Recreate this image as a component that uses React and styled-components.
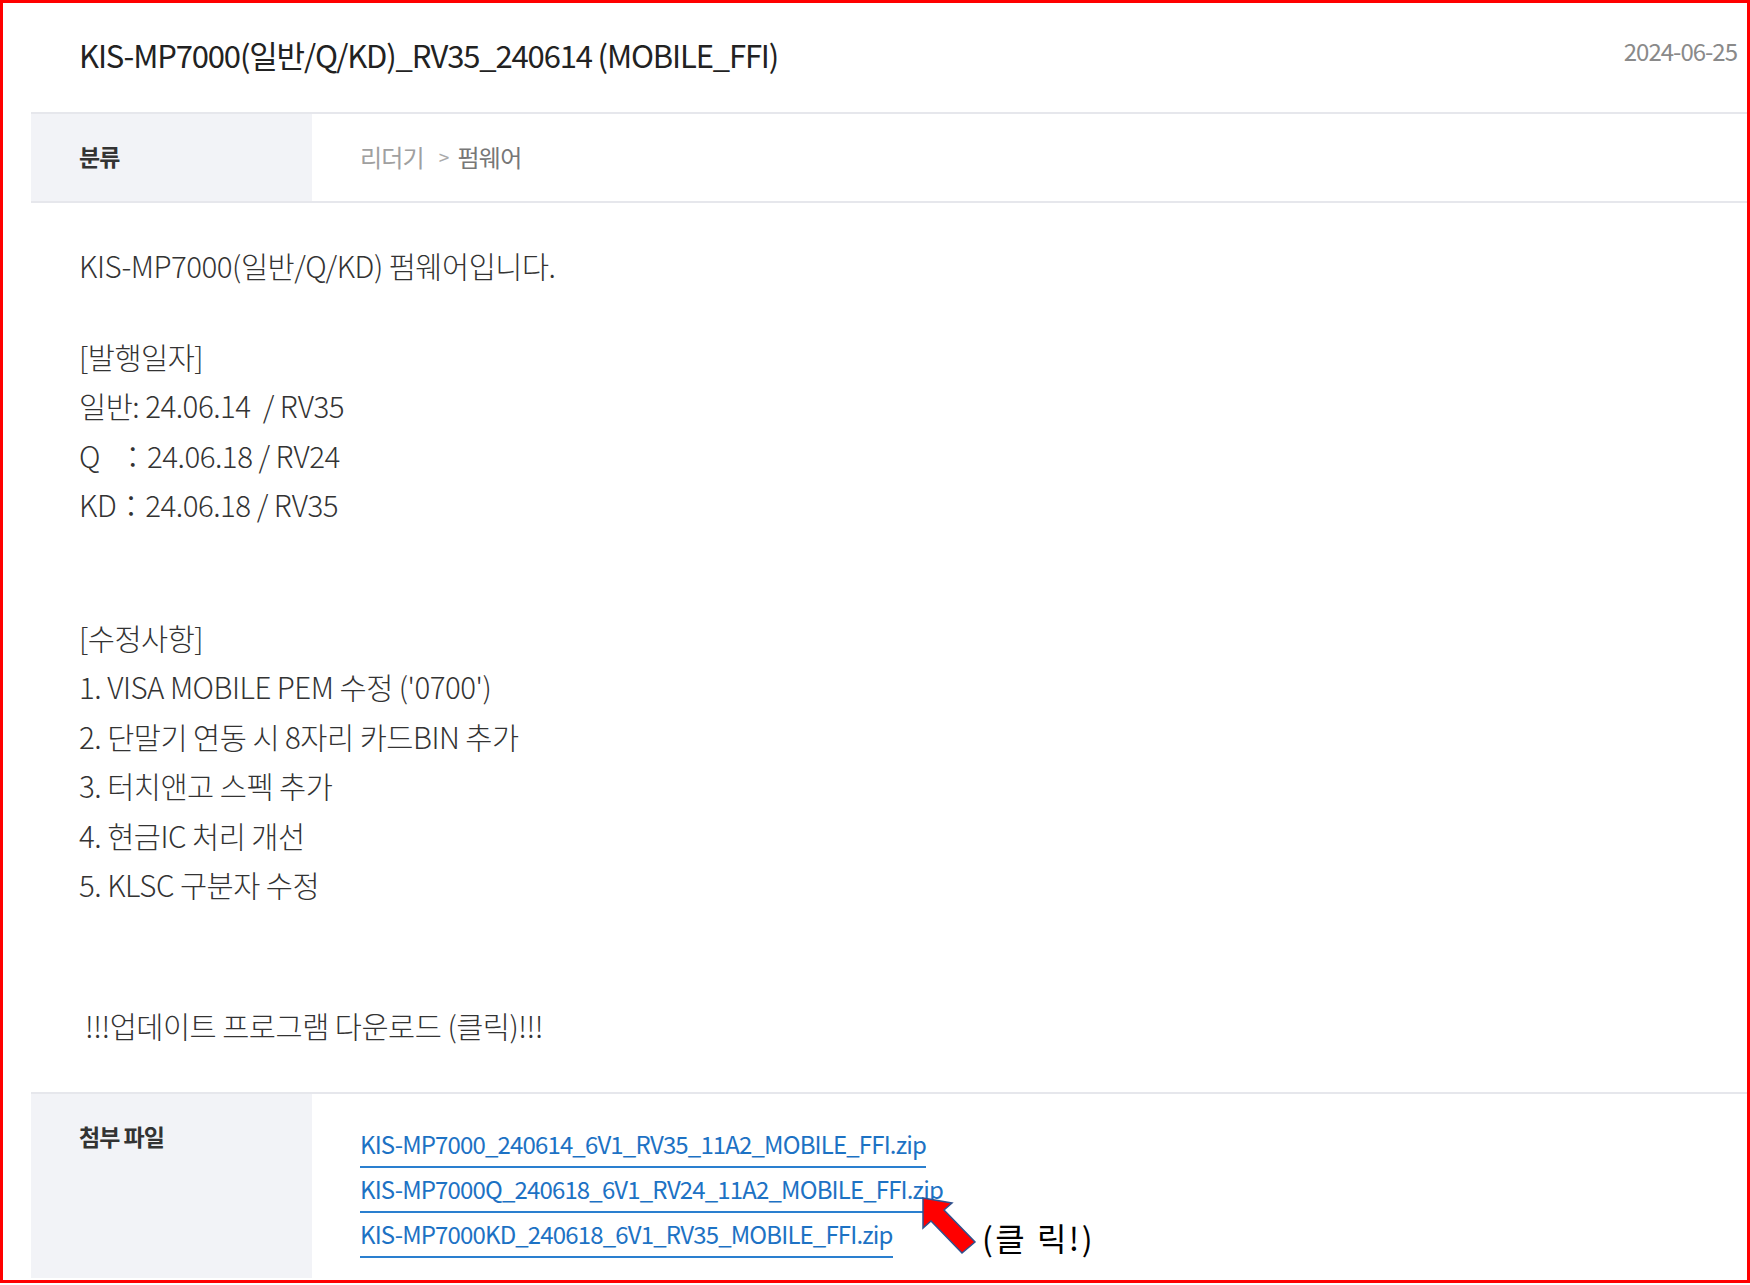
import React from 'react';
import styled, { createGlobalStyle } from 'styled-components';

const GlobalStyle = createGlobalStyle`
  html, body {
    margin: 0;
    padding: 0;
    background: #ffffff;
  }
  body {
    font-family: "Noto Sans CJK KR", "Noto Sans", sans-serif;
  }
`;

const bodyLines = [
  { text: 'KIS-MP7000(일반/Q/KD) 펌웨어입니다.', gap: 0 },
  { text: '[발행일자]', gap: 41 },
  { text: '일반: 24.06.14  / RV35', gap: 0 },
  { text: 'Q   ：24.06.18 / RV24', gap: 0 },
  { text: 'KD：24.06.18 / RV35', gap: 0 },
  { text: '[수정사항]', gap: 83 },
  { text: "1. VISA MOBILE PEM 수정 ('0700')", gap: 0 },
  { text: '2. 단말기 연동 시 8자리 카드BIN 추가', gap: 0 },
  { text: '3. 터치앤고 스펙 추가', gap: 0 },
  { text: '4. 현금IC 처리 개선', gap: 0 },
  { text: '5. KLSC 구분자 수정', gap: 0 },
  { text: ' !!!업데이트 프로그램 다운로드 (클릭)!!!', gap: 91 },
];

const files = [
  'KIS-MP7000_240614_6V1_RV35_11A2_MOBILE_FFI.zip',
  'KIS-MP7000Q_240618_6V1_RV24_11A2_MOBILE_FFI.zip',
  'KIS-MP7000KD_240618_6V1_RV35_MOBILE_FFI.zip',
];

const App = () => {
  return (
    <>
      <GlobalStyle />
      <Frame>
        <Header>
          <Title>KIS-MP7000(일반/Q/KD)_RV35_240614 (MOBILE_FFI)</Title>
          <DateText>2024-06-25</DateText>
        </Header>

        <InfoRow>
          <LabelCell>분류</LabelCell>
          <ValueCell>
            <Crumb>리더기</Crumb>
            <CrumbSep>&gt;</CrumbSep>
            <Crumb $current>펌웨어</Crumb>
          </ValueCell>
        </InfoRow>

        <Content>
          {bodyLines.map((line, i) => (
            <Line key={i} $gap={line.gap}>{line.text}</Line>
          ))}
        </Content>

        <FileRow>
          <FileLabel>첨부 파일</FileLabel>
          <FileCell>
            {files.map((name) => (
              <FileLink key={name} href="#">{name}</FileLink>
            ))}
          </FileCell>
        </FileRow>

        <Callout>
          <ArrowMark width="70" height="70" viewBox="0 0 70 70">
            <polygon
              points="8,8 37,13 29,20 60,52 47,63 16,31 8,38"
              fill="#ff0000"
              stroke="#2f528f"
              strokeWidth="1.5"
              strokeLinejoin="miter"
            />
          </ArrowMark>
          <CalloutText>(클 릭!)</CalloutText>
        </Callout>
      </Frame>
    </>
  );
};

export default App;

///Styled Components

const Frame = styled.div`
position: relative;
box-sizing: border-box;
width: 1750px;
height: 1283px;
border: 3px solid #ff0000;
padding-left: 28px;
background: #ffffff;
overflow: hidden;
`

const Header = styled.div`
display: flex;
align-items: center;
justify-content: space-between;
height: 109px;
padding: 0 10px 0 48px;
`

const Title = styled.h1`
margin: -6px 0 0 0;
font-size: 31px;
font-weight: 400;
letter-spacing: -1.15px;
color: #222222;
`

const DateText = styled.span`
font-size: 24px;
letter-spacing: -1px;
color: #8a8a8a;
margin-top: -14px;
`

const InfoRow = styled.div`
display: flex;
border-top: 2px solid #e6e7ec;
border-bottom: 2px solid #e6e7ec;
height: 87px;
`

const LabelCell = styled.div`
box-sizing: border-box;
width: 281px;
flex-shrink: 0;
background: #f2f3f7;
display: flex;
align-items: center;
padding: 0 0 3px 48px;
font-size: 23px;
font-weight: 700;
color: #333333;
letter-spacing: -1px;
`

const ValueCell = styled.div`
display: flex;
align-items: center;
padding: 0 0 3px 48px;
font-size: 24px;
letter-spacing: -0.8px;
`

const Crumb = styled.span`
color: ${(p) => (p.$current ? '#777777' : '#a0a0a0')};
`

const CrumbSep = styled.span`
color: #aaaaaa;
font-size: 19px;
margin: 0 9px 0 15px;
`

const Content = styled.div`
padding: 38px 0 42px 48px;
`

const Line = styled.p`
margin: ${(p) => p.$gap}px 0 0 0;
font-size: 29.5px;
font-weight: 300;
line-height: 49.5px;
letter-spacing: -0.5px;
color: #333333;
white-space: pre-wrap;
`

const FileRow = styled.div`
display: flex;
border-top: 2px solid #e6e7ec;
height: 184px;
`

const FileLabel = styled.div`
box-sizing: border-box;
width: 281px;
flex-shrink: 0;
background: #f2f3f7;
padding: 24px 0 0 48px;
font-size: 23px;
font-weight: 700;
color: #333333;
letter-spacing: -1px;
line-height: 36px;
`

const FileCell = styled.div`
display: flex;
flex-direction: column;
align-items: flex-start;
gap: 5px;
padding: 34px 0 0 48px;
`

const FileLink = styled.a`
display: block;
font-size: 24px;
line-height: 32px;
letter-spacing: -0.85px;
color: #1d72c4;
text-decoration: none;
padding-bottom: 6px;
border-bottom: 2px solid #2a7fcf;
`

const Callout = styled.div`
position: absolute;
left: 912px;
top: 1187px;
display: flex;
align-items: flex-end;
`

const ArrowMark = styled.svg`
display: block;
`

const CalloutText = styled.span`
font-family: "Noto Sans CJK KR", "Noto Sans", sans-serif;
font-size: 32px;
color: #000000;
letter-spacing: 2.5px;
margin-left: -3px;
margin-bottom: 0px;
`
